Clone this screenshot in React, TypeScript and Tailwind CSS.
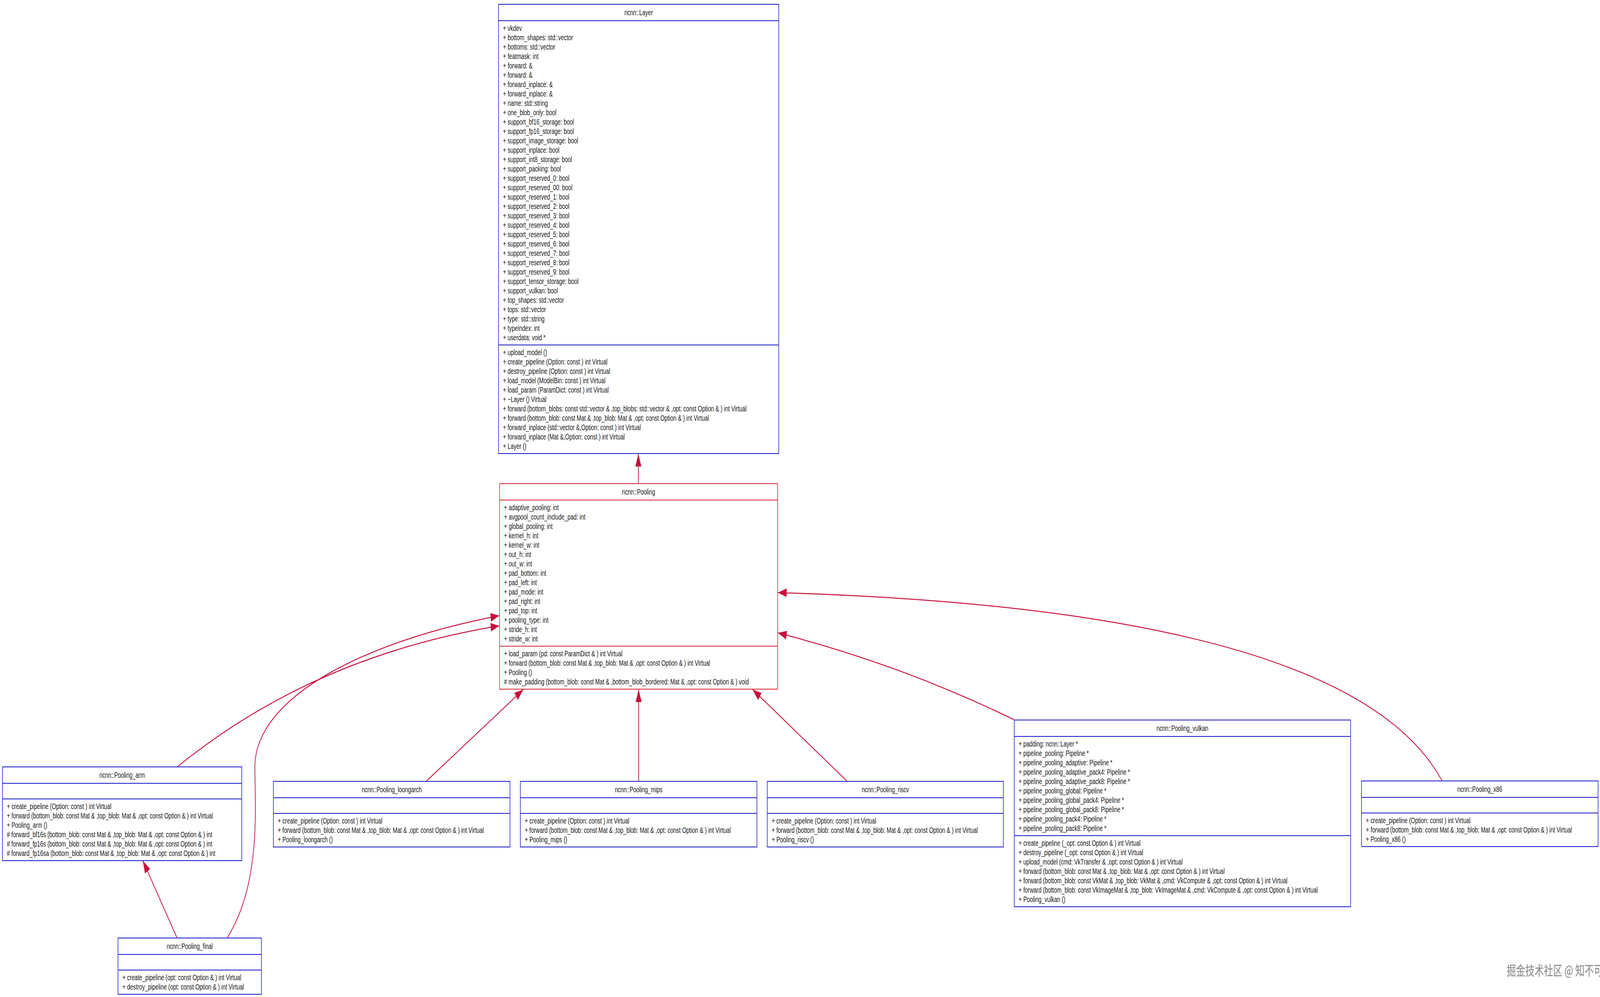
import React from "react";

type BoxProps = {
  left: number;
  top: number;
  width: number;
  title: string;
  attrs: string[];
  methods: string[];
  red?: boolean;
};

function Box({ left, top, width, title, attrs, methods, red }: BoxProps) {
  const bc = red ? "border-[#d2202e]" : "border-[#1212c8]";
  return (
    <div
      className={`absolute bg-white border-2 ${bc} flex flex-col text-[20px] text-[#151515]`}
      style={{ left, top, width }}
    >
      <div className="h-[40px] flex items-center justify-center">{title}</div>
      {attrs.length > 0 ? (
        <div className={`border-t-2 ${bc} py-[6px] px-[15px]`}>
          {attrs.map((a, i) => (
            <div key={i} className="h-[24px] leading-[24px] whitespace-pre">{a}</div>
          ))}
        </div>
      ) : (
        <div className={`border-t-2 ${bc} h-[40px]`} />
      )}
      <div className={`border-t-2 ${bc} py-[6px] px-[15px]`}>
        {methods.map((m, i) => (
          <div key={i} className="h-[24px] leading-[24px] whitespace-pre">{m}</div>
        ))}
      </div>
    </div>
  );
}

const layerAttrs = [
  "+ vkdev",
  "+ bottom_shapes: std::vector",
  "+ bottoms: std::vector",
  "+ featmask: int",
  "+ forward: &",
  "+ forward: &",
  "+ forward_inplace: &",
  "+ forward_inplace: &",
  "+ name: std::string",
  "+ one_blob_only: bool",
  "+ support_bf16_storage: bool",
  "+ support_fp16_storage: bool",
  "+ support_image_storage: bool",
  "+ support_inplace: bool",
  "+ support_int8_storage: bool",
  "+ support_packing: bool",
  "+ support_reserved_0: bool",
  "+ support_reserved_00: bool",
  "+ support_reserved_1: bool",
  "+ support_reserved_2: bool",
  "+ support_reserved_3: bool",
  "+ support_reserved_4: bool",
  "+ support_reserved_5: bool",
  "+ support_reserved_6: bool",
  "+ support_reserved_7: bool",
  "+ support_reserved_8: bool",
  "+ support_reserved_9: bool",
  "+ support_tensor_storage: bool",
  "+ support_vulkan: bool",
  "+ top_shapes: std::vector",
  "+ tops: std::vector",
  "+ type: std::string",
  "+ typeindex: int",
  "+ userdata: void *",
];
const layerMethods = [
  "+ upload_model ()",
  "+ create_pipeline (Option: const ) int Virtual",
  "+ destroy_pipeline (Option: const ) int Virtual",
  "+ load_model (ModelBin: const ) int Virtual",
  "+ load_param (ParamDict: const ) int Virtual",
  "+ ~Layer () Virtual",
  "+ forward (bottom_blobs: const std::vector & ,top_blobs: std::vector & ,opt: const Option & ) int Virtual",
  "+ forward (bottom_blob: const Mat & ,top_blob: Mat & ,opt: const Option & ) int Virtual",
  "+ forward_inplace (std::vector &,Option: const ) int Virtual",
  "+ forward_inplace (Mat &,Option: const ) int Virtual",
  "+ Layer ()",
];
const poolAttrs = [
  "+ adaptive_pooling: int",
  "+ avgpool_count_include_pad: int",
  "+ global_pooling: int",
  "+ kernel_h: int",
  "+ kernel_w: int",
  "+ out_h: int",
  "+ out_w: int",
  "+ pad_bottom: int",
  "+ pad_left: int",
  "+ pad_mode: int",
  "+ pad_right: int",
  "+ pad_top: int",
  "+ pooling_type: int",
  "+ stride_h: int",
  "+ stride_w: int",
];
const poolMethods = [
  "+ load_param (pd: const ParamDict & ) int Virtual",
  "+ forward (bottom_blob: const Mat & ,top_blob: Mat & ,opt: const Option & ) int Virtual",
  "+ Pooling ()",
  "# make_padding (bottom_blob: const Mat & ,bottom_blob_bordered: Mat & ,opt: const Option & ) void",
];
const fwd = "+ forward (bottom_blob: const Mat & ,top_blob: Mat & ,opt: const Option & ) int Virtual";
const cp = "+ create_pipeline (Option: const ) int Virtual";

function head(tx: number, ty: number, fx: number, fy: number) {
  const dx = tx - fx, dy = ty - fy;
  const l = Math.hypot(dx, dy);
  const ux = dx / l, uy = dy / l;
  const L = 32, W = 11;
  const bx = tx - ux * L, by = ty - uy * L;
  return `${tx},${ty} ${bx - uy * W},${by + ux * W} ${bx + uy * W},${by - ux * W}`;
}

const C = "#c8103c";

function useFit() {
  const get = () => {
    if (typeof window === "undefined") return { sx: 1, sy: 1 };
    const sx = window.innerWidth / 5870;
    const sy = window.innerHeight / 2552;
    return { sx: Math.abs(sx - 1) < 0.01 ? 1 : sx, sy: Math.abs(sy - 1) < 0.01 ? 1 : sy };
  };
  const [s, setS] = React.useState(get);
  React.useEffect(() => {
    const f = () => setS(get());
    window.addEventListener("resize", f);
    return () => window.removeEventListener("resize", f);
  }, []);
  return s;
}

export default function App() {
  const { sx, sy } = useFit();
  const paths = [
    { d: "M2342 1237 L2342 1162", t: [2342, 1162, 2342, 1237] },
    { d: "M652 1962 Q 1150 1680 1832 1602", t: [1832, 1602, 1150, 1680] },
    { d: "M834 2400 C 960 2260 935 2060 935 1960 C 940 1780 1350 1640 1832 1576", t: [1832, 1576, 1350, 1640] },
    { d: "M649 2400 L524 2203", t: [524, 2203, 649, 2400] },
    { d: "M1565 1999 L1920 1765", t: [1920, 1765, 1565, 1999] },
    { d: "M2343 1999 L2343 1765", t: [2343, 1765, 2343, 1999] },
    { d: "M3107 1999 L2761 1765", t: [2761, 1765, 3107, 1999] },
    { d: "M3720 1842 Q 3300 1700 2854 1620", t: [2854, 1620, 3300, 1700] },
    { d: "M5290 1998 Q 4950 1560 2854 1517", t: [2854, 1517, 4200, 1530] },
  ];
  return (
    <div className="w-full overflow-hidden bg-white" style={{ height: 2552 * sy }}>
      <div
        className="relative w-[5870px] h-[2552px] bg-white origin-top-left"
        style={{ fontFamily: '"Liberation Sans", Arial, sans-serif', transform: sx === 1 && sy === 1 ? undefined : `scale(${sx}, ${sy})` }}
      >
        <svg className="absolute left-0 top-0" width={5870} height={2552}>
          {paths.map((p, i) => (
            <g key={i}>
              <path d={p.d} fill="none" stroke={C} strokeWidth={2.5} />
              <polygon points={head(p.t[0], p.t[1], p.t[2], p.t[3])} fill={C} />
            </g>
          ))}
        </svg>
        <Box left={1828} top={10} width={1030} title="ncnn::Layer" attrs={layerAttrs} methods={layerMethods} />
        <Box left={1832} top={1237} width={1022} title="ncnn::Pooling" attrs={poolAttrs} methods={poolMethods} red />
        <Box
          left={8}
          top={1962}
          width={880}
          title="ncnn::Pooling_arm"
          attrs={[]}
          methods={[
            cp,
            fwd,
            "+ Pooling_arm ()",
            "# forward_bf16s (bottom_blob: const Mat & ,top_blob: Mat & ,opt: const Option & ) int",
            "# forward_fp16s (bottom_blob: const Mat & ,top_blob: Mat & ,opt: const Option & ) int",
            "# forward_fp16sa (bottom_blob: const Mat & ,top_blob: Mat & ,opt: const Option & ) int",
          ]}
        />
        <Box left={1002} top={1999} width={870} title="ncnn::Pooling_loongarch" attrs={[]} methods={[cp, fwd, "+ Pooling_loongarch ()"]} />
        <Box left={1908} top={1999} width={870} title="ncnn::Pooling_mips" attrs={[]} methods={[cp, fwd, "+ Pooling_mips ()"]} />
        <Box left={2814} top={1999} width={868} title="ncnn::Pooling_riscv" attrs={[]} methods={[cp, fwd, "+ Pooling_riscv ()"]} />
        <Box
          left={3720}
          top={1842}
          width={1236}
          title="ncnn::Pooling_vulkan"
          attrs={[
            "+ padding: ncnn::Layer *",
            "+ pipeline_pooling: Pipeline *",
            "+ pipeline_pooling_adaptive: Pipeline *",
            "+ pipeline_pooling_adaptive_pack4: Pipeline *",
            "+ pipeline_pooling_adaptive_pack8: Pipeline *",
            "+ pipeline_pooling_global: Pipeline *",
            "+ pipeline_pooling_global_pack4: Pipeline *",
            "+ pipeline_pooling_global_pack8: Pipeline *",
            "+ pipeline_pooling_pack4: Pipeline *",
            "+ pipeline_pooling_pack8: Pipeline *",
          ]}
          methods={[
            "+ create_pipeline (_opt: const Option & ) int Virtual",
            "+ destroy_pipeline (_opt: const Option & ) int Virtual",
            "+ upload_model (cmd: VkTransfer & ,opt: const Option & ) int Virtual",
            fwd,
            "+ forward (bottom_blob: const VkMat & ,top_blob: VkMat & ,cmd: VkCompute & ,opt: const Option & ) int Virtual",
            "+ forward (bottom_blob: const VkImageMat & ,top_blob: VkImageMat & ,cmd: VkCompute & ,opt: const Option & ) int Virtual",
            "+ Pooling_vulkan ()",
          ]}
        />
        <Box left={4994} top={1998} width={870} title="ncnn::Pooling_x86" attrs={[]} methods={[cp, fwd, "+ Pooling_x86 ()"]} />
        <Box
          left={432}
          top={2400}
          width={528}
          title="ncnn::Pooling_final"
          attrs={[]}
          methods={[
            "+ create_pipeline (opt: const Option & ) int Virtual",
            "+ destroy_pipeline (opt: const Option & ) int Virtual",
          ]}
        />
        <div
          className="absolute left-[5528px] top-[2460px] text-[34px] leading-[46px] text-[#8a8a8a] whitespace-nowrap"
          style={{ fontFamily: '"Noto Sans CJK SC", sans-serif', textShadow: "1px 1px 0 #fff, -1px -1px 0 #ddd" }}
        >
          掘金技术社区 @ 知不可乎
        </div>
      </div>
    </div>
  );
}
